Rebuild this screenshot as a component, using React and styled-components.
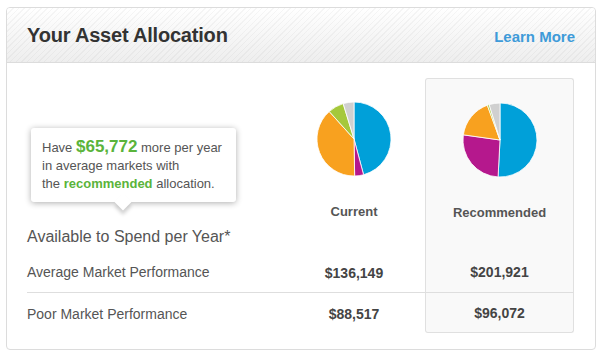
import React from 'react';
import styled, { createGlobalStyle } from 'styled-components';

const GlobalStyle = createGlobalStyle`
    body {
        margin: 0;
        padding: 7px 6px;
        background: #fff;
        font-family: 'Liberation Sans', Arial, sans-serif;
    }
`;

const currentMix = [
    { to: 165, color: '#00a0d9' },
    { to: 179, color: '#b5188d' },
    { to: 318, color: '#f8a11f' },
    { to: 343, color: '#a5c83b' },
    { to: 360, color: '#d0d0d0' }
];

const recommendedMix = [
    { to: 183, color: '#00a0d9' },
    { to: 278, color: '#b5188d' },
    { to: 340, color: '#f8a11f' },
    { to: 343, color: '#a5c83b' },
    { to: 360, color: '#d0d0d0' }
];

const rows = [
    { label: 'Average Market Performance', current: '$136,149', recommended: '$201,921' },
    { label: 'Poor Market Performance', current: '$88,517', recommended: '$96,072' }
];

// point on the circle, angle in degrees clockwise from 12 o'clock
const polar = (c, r, deg) => {
    const a = (deg - 90) * Math.PI / 180;
    return [c + r * Math.cos(a), c + r * Math.sin(a)];
};

function Pie({ slices }) {
    const c = 38;
    const r = 37;
    let from = 0;
    return (
        <svg width="76" height="76" viewBox="0 0 76 76">
            {slices.map((s) => {
                const [x1, y1] = polar(c, r, from);
                const [x2, y2] = polar(c, r, s.to);
                const large = s.to - from > 180 ? 1 : 0;
                const d = `M${c},${c} L${x1},${y1} A${r},${r} 0 ${large} 1 ${x2},${y2} Z`;
                from = s.to;
                return <path key={s.color} d={d} fill={s.color} stroke="#fff" strokeWidth="0.8" />;
            })}
        </svg>
    );
}

function App() {
    return (
        <>
            <GlobalStyle />
            <Card>
                <Header>
                    <Title>Your Asset Allocation</Title>
                    <LearnMore href="#">Learn More</LearnMore>
                </Header>
                <Body>
                    <LabelCell>
                        <Tooltip>
                            Have <Big>$65,772</Big> more per year<br />
                            in average markets with<br />
                            the <Green>recommended</Green> allocation.
                        </Tooltip>
                        <Heading>Available to Spend per Year*</Heading>
                    </LabelCell>
                    <ChartCell>
                        <Pie slices={currentMix} />
                        <ColumnName>Current</ColumnName>
                    </ChartCell>
                    <ChartCell $highlight $first>
                        <Pie slices={recommendedMix} />
                        <ColumnName>Recommended</ColumnName>
                    </ChartCell>

                    {rows.map((row, i) => (
                        <React.Fragment key={row.label}>
                            <RowLabel $divider={i > 0}>{row.label}</RowLabel>
                            <Value $divider={i > 0} $shift>{row.current}</Value>
                            <Value $divider={i > 0} $highlight $last={i === rows.length - 1}>{row.recommended}</Value>
                        </React.Fragment>
                    ))}
                </Body>
            </Card>
        </>
    );
}

export default App;

// Styling
const Card = styled.div`
    width: 588px;
    border: 1px solid #dcdcdc;
    border-radius: 4px;
    overflow: hidden;
    background: #fff;
`;

const Header = styled.div`
    height: 54px;
    display: flex;
    align-items: center;
    justify-content: space-between;
    padding: 0 19px 0 20px;
    border-bottom: 1px solid #dcdcdc;
    background:
        repeating-linear-gradient(135deg, rgba(0, 0, 0, 0.035) 0 1px, transparent 1px 4px),
        linear-gradient(#ffffff, #eeeeee);
`;

const Title = styled.h1`
    margin: 0;
    font-size: 20px;
    font-weight: bold;
    color: #333;
    letter-spacing: -0.2px;
`;

const LearnMore = styled.a`
    font-size: 15px;
    font-weight: bold;
    color: #3e9bd9;
    text-decoration: none;
    margin-top: 2px;
    margin-right: 1px;
`;

const Body = styled.div`
    display: grid;
    grid-template-columns: 1fr 136px 149px;
    padding: 15px 21px 15px 20px;
`;

const LabelCell = styled.div`
    display: flex;
    flex-direction: column;
    justify-content: flex-end;
    padding-bottom: 4px;
`;

const Tooltip = styled.div`
    position: relative;
    width: 205px;
    height: 74px;
    box-sizing: border-box;
    margin: 0 0 25px 4px;
    padding: 10px 11px;
    background: #fff;
    border-radius: 3px;
    box-shadow: 0 1px 6px rgba(0, 0, 0, 0.32);
    font-size: 13px;
    line-height: 18px;
    color: #555;
    white-space: nowrap;

    &::after {
        content: '';
        position: absolute;
        left: 86px;
        bottom: -6px;
        width: 12px;
        height: 12px;
        background: #fff;
        transform: rotate(45deg);
        box-shadow: 3px 3px 4px rgba(0, 0, 0, 0.18);
    }
`;

const Big = styled.b`
    font-size: 17px;
    color: #5ab43b;
`;

const Green = styled.b`
    color: #5ab43b;
`;

const Heading = styled.div`
    font-size: 16px;
    line-height: 20px;
    color: #555;
`;

const ChartCell = styled.div`
    display: flex;
    flex-direction: column;
    align-items: center;
    padding: 23px ${(p) => (p.$highlight ? '0' : '6px')} 30px 0;
    background: ${(p) => (p.$highlight ? '#f9f9f9' : 'transparent')};
    border: ${(p) => (p.$highlight ? '1px solid #e0e0e0' : 'none')};
    border-bottom: none;
    border-radius: ${(p) => (p.$first ? '3px 3px 0 0' : '0')};
`;

const ColumnName = styled.div`
    margin-top: 27px;
    font-size: 13px;
    line-height: 16px;
    font-weight: bold;
    color: #555;
`;

const RowLabel = styled.div`
    display: flex;
    align-items: center;
    height: 41px;
    font-size: 14px;
    color: #555;
    border-top: ${(p) => (p.$divider ? '1px solid #dedede' : 'none')};
`;

const Value = styled.div`
    display: flex;
    align-items: center;
    justify-content: center;
    height: 41px;
    padding-right: ${(p) => (p.$shift ? '6px' : '0')};
    padding-top: ${(p) => (p.$shift ? '2px' : '0')};
    box-sizing: border-box;
    font-size: 14px;
    font-weight: bold;
    color: #444;
    background: ${(p) => (p.$highlight ? '#f9f9f9' : 'transparent')};
    border-top: ${(p) => (p.$divider ? '1px solid #dedede' : 'none')};
    border-left: ${(p) => (p.$highlight ? '1px solid #e0e0e0' : 'none')};
    border-right: ${(p) => (p.$highlight ? '1px solid #e0e0e0' : 'none')};
    border-bottom: ${(p) => (p.$last ? '1px solid #e0e0e0' : 'none')};
    border-radius: ${(p) => (p.$last ? '0 0 3px 3px' : '0')};
`;
